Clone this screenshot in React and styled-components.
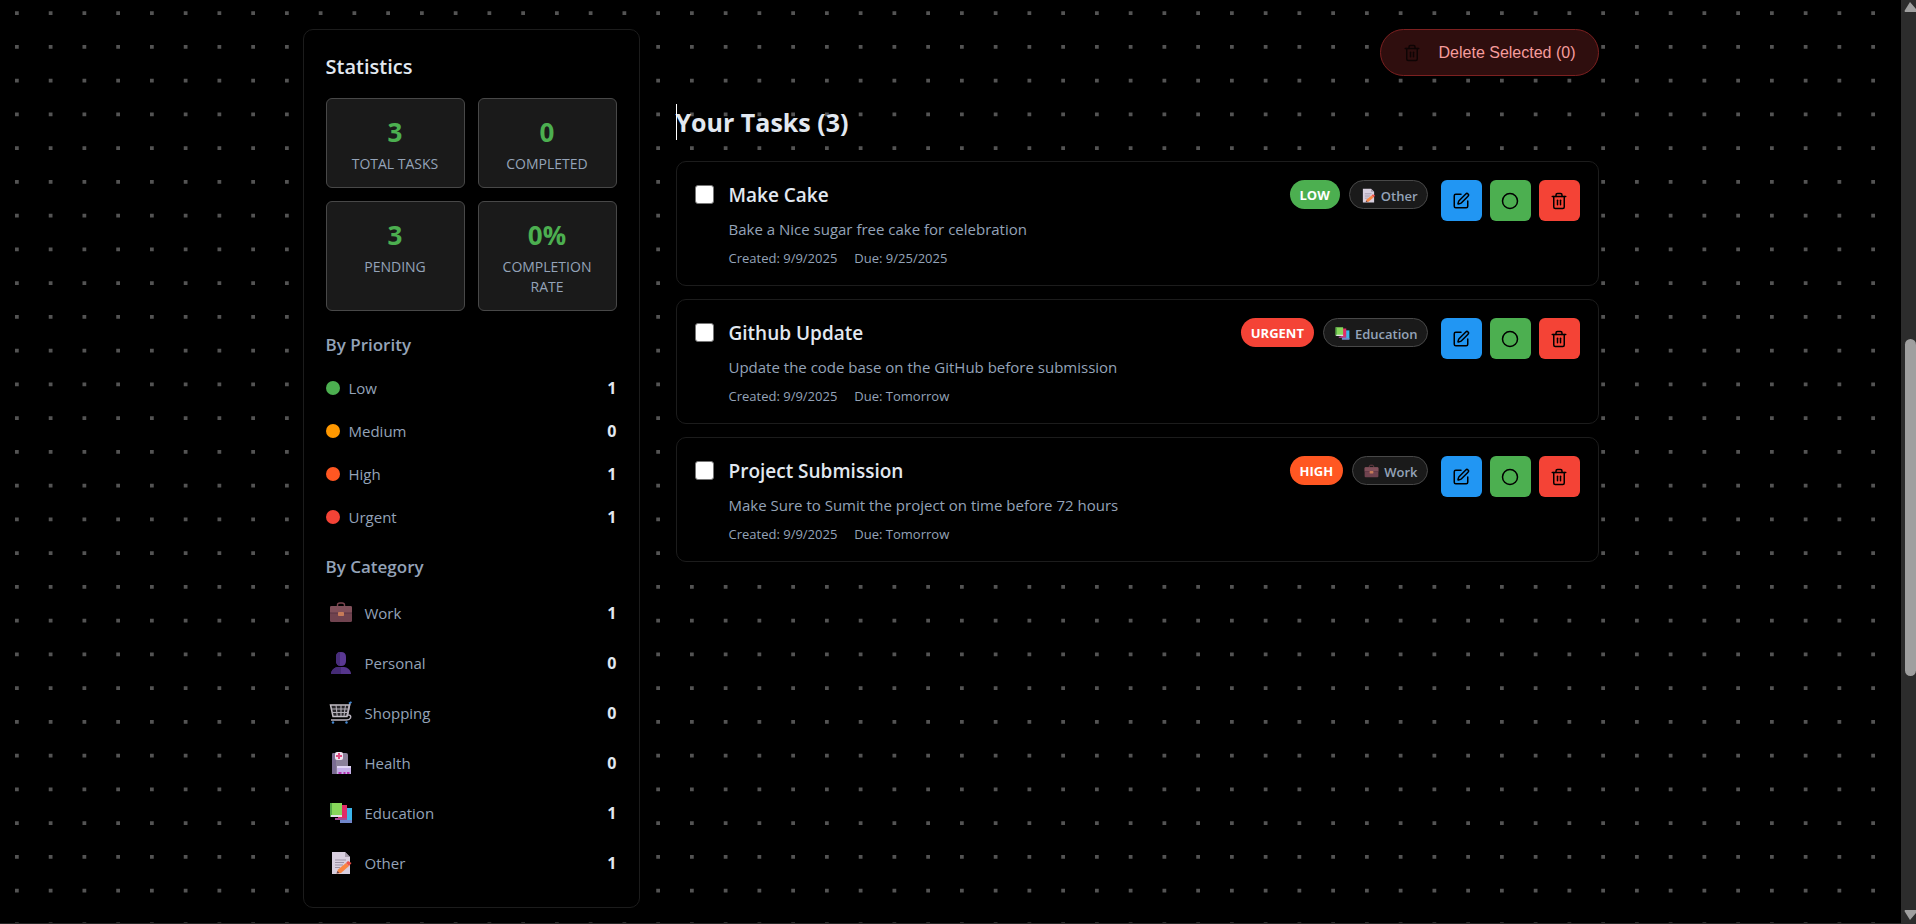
import React from "react";
import styled, { createGlobalStyle } from "styled-components";
import { Circle, SquarePen, Trash2 } from "lucide-react";

const GlobalStyle = createGlobalStyle`
  *, *::before, *::after { box-sizing: border-box; }
  html { background: #000; }
  body {
    margin: 0;
    color: #e2e8f0;
    font-family: "Open Sans", "Noto Sans", sans-serif;
    font-size: 15px;
    line-height: 24px;
    overflow-x: hidden;
  }
  h1, h2, h3, p, ul, dl, dd { margin: 0; padding: 0; }
`;

const Page = styled.div`
  display: flex;
  min-height: 100vh;
  position: relative;
  isolation: isolate;
`;

const Dots = styled.svg`
  position: absolute;
  inset: 0;
  z-index: -1;
  width: 100%;
  height: 100%;
  stroke: #545454;
`;

const Content = styled.div`
  flex: 1;
  min-width: 0;
  padding: 29px 24px 14px;
  border-bottom: 1px solid #262626;
`;

const Layout = styled.div`
  display: flex;
  align-items: flex-start;
  gap: 36px;
  max-width: 1296px;
  margin: 0 auto;
`;

const Panel = styled.aside`
  flex: 0 0 337px;
  padding: 22px 22px 19px;
  background: #000;
  border: 1px solid #1c1c1c;
  border-radius: 10px;
`;

const PanelTitle = styled.h2`
  font-size: 20px;
  font-weight: 600;
  line-height: 30px;
  margin-bottom: 16px;
`;

const StatGrid = styled.dl`
  display: grid;
  grid-template-columns: 1fr 1fr;
  gap: 13px;
`;

const StatCard = styled.div`
  display: flex;
  flex-direction: column-reverse;
  justify-content: flex-end;
  gap: 4px;
  padding: 15px 16px 13px;
  text-align: center;
  background: #1a1a1a;
  border: 1px solid #484848;
  border-radius: 6px;
`;

const StatValue = styled.dd`
  color: #4caf50;
  font-size: 26px;
  font-weight: 700;
  line-height: 36px;
`;

const StatLabel = styled.dt`
  color: #94a3b8;
  font-size: 14px;
  line-height: 20px;
  text-transform: uppercase;
`;

const GroupTitle = styled.h3`
  margin: ${(p) => p.$top}px 0 9px;
  color: #94a3b8;
  font-size: 17px;
  font-weight: 600;
  line-height: 24px;
`;

const List = styled.ul`
  list-style: none;
`;

const Row = styled.li`
  display: flex;
  align-items: center;
  gap: ${(p) => p.$gap}px;
  height: ${(p) => p.$height}px;
  color: #94a3b8;
`;

const Swatch = styled.span`
  width: 14px;
  height: 14px;
  border-radius: 50%;
  background: ${(p) => p.$color};
`;

const IconCell = styled.span`
  display: flex;
  justify-content: center;
  width: 30px;
`;

const Count = styled.strong`
  margin-left: auto;
  color: #e2e8f0;
  font-size: 16px;
  font-weight: 700;
`;

const Main = styled.main`
  flex: 1;
  min-width: 0;
  display: flex;
  flex-direction: column;
`;

const DeleteButton = styled.button`
  align-self: flex-end;
  display: flex;
  align-items: center;
  gap: 18px;
  height: 47px;
  padding: 0 22px;
  color: #f69c9c;
  background: #2f0e0e;
  border: 1px solid #7c2020;
  border-radius: 24px;
  font-family: "Liberation Sans", Arial, sans-serif;
  font-size: 16px;
  line-height: 20px;

  svg { color: #0e0404; }
`;

const TasksTitle = styled.h1`
  position: relative;
  margin: 28px 0 21px;
  font-size: 25px;
  font-weight: 700;
  line-height: 36px;
`;

const Caret = styled.span`
  position: absolute;
  left: 0;
  top: 0;
  width: 1px;
  height: 36px;
  background: #fff;
`;

const TaskList = styled.ul`
  list-style: none;
  display: grid;
  gap: 13px;
`;

const TaskCard = styled.li`
  display: flex;
  align-items: flex-start;
  padding: 18px 18px 17px;
  background: #000;
  border: 1px solid #1c1c1c;
  border-radius: 10px;
`;

const Check = styled.input`
  appearance: none;
  flex: none;
  width: 19px;
  height: 19px;
  margin: 5px 15px 0 0;
  background: #fff;
  border: 1px solid #767676;
  border-radius: 3px;

  &:checked { background: #2196f3; }
`;

const TaskBody = styled.div`
  flex: 1;
  min-width: 0;
`;

const TaskTitle = styled.label`
  display: block;
  font-size: 19px;
  font-weight: 600;
  line-height: 30px;
`;

const TaskText = styled.p`
  margin-top: 7px;
  color: #94a3b8;
`;

const Meta = styled.p`
  display: flex;
  gap: 17px;
  margin-top: 7px;
  color: #94a3b8;
  font-size: 13px;
  line-height: 20px;
`;

const Badges = styled.div`
  display: flex;
  gap: 9px;
  margin-right: 13px;
`;

const Badge = styled.span`
  display: flex;
  align-items: center;
  height: 29px;
  padding: 0 10px;
  color: #fff;
  background: ${(p) => p.$color};
  border-radius: 15px;
  font-size: 13px;
  font-weight: 700;
  line-height: 20px;
  text-transform: uppercase;
`;

const CategoryPill = styled.span`
  display: flex;
  align-items: center;
  gap: 5px;
  height: 29px;
  padding: 2px 9px 0 11px;
  color: #94a3b8;
  background: #1a1a1a;
  border: 1px solid #484848;
  border-radius: 15px;
  font-size: 13px;
  font-weight: 600;
  line-height: 20px;
`;

const Actions = styled.div`
  display: flex;
  gap: 8px;
`;

const ActionButton = styled.button`
  display: grid;
  place-items: center;
  width: 41px;
  height: 41px;
  padding: 0;
  color: #000;
  background: ${(p) => p.$color};
  border: 0;
  border-radius: 6px;
`;

const ScrollTrack = styled.div`
  flex: 0 0 15px;
  display: flex;
  flex-direction: column;
  height: 100vh;
  background: #2c2c2c;
  color: #9f9f9f;
`;

const ScrollArrow = styled.svg`
  display: block;
  flex: none;
  width: 15px;
  height: 17px;
`;

const ScrollSpace = styled.div`
  flex: ${(p) => p.$grow} 1 0;
`;

const ScrollThumb = styled.div`
  flex: 337 1 0;
  width: 11px;
  margin-left: 4px;
  background: #9f9f9f;
  border-radius: 6px;
`;

const drawings = {
  Work: (
    <>
      <path d="M8.500 5V4c0-1.500 1-2 2.500-2h2c1.500 0 2.500.5 2.500 2v1" fill="none" stroke="#7b4650" strokeWidth="1.400" />
      <rect x="1" y="5" width="22" height="16" rx="1.500" fill="#70434f" />
      <path d="M1 6.500Q1 5 2.500 5h19Q23 5 23 6.500V11q0 1-1.500 1h-19Q1 12 1 11z" fill="#81505a" />
      <path d="M1 12h22" stroke="#593442" />
      <rect x="9" y="11" width="6" height="4" rx=".7" fill="#c67b58" />
    </>
  ),
  Personal: (
    <>
      <path d="M2 23c0-4 4-7 7-7h6c3 0 7 3 7 7z" fill="#55358c" />
      <path d="M2 23c0-4 4-7 7-7h3v7z" fill="#452b76" />
      <path d="M7 6q0-5 5-5t5 5v4q0 5-5 5t-5-5z" fill="#5a3892" />
      <path d="M7 6q0-5 4-5v14q-4-1-4-5z" fill="#482d7b" />
    </>
  ),
  Shopping: (
    <>
      <path d="M1.500 4h19L18 15.500H4z" fill="#29272b" stroke="#c3bec5" strokeWidth="1.500" />
      <path d="M2 8h17.500M3 11.500h16M7 4l1.200 11M12 4v11M16.500 4L15 15" fill="none" stroke="#b3afb7" strokeWidth="1.100" />
      <path d="M21 2l-2.500 12q4-.5 3 3-1 2-4 2H2" fill="none" stroke="#b9b2bd" strokeWidth="1.500" />
      <path d="M20 2.500L22.500 1" stroke="#4387d0" strokeWidth="2" />
      <circle cx="4" cy="21.500" r="1.200" fill="#4387d0" />
      <circle cx="17.500" cy="21.500" r="1.200" fill="#4387d0" />
    </>
  ),
  Health: (
    <>
      <path d="M3 3.500Q3 2 4.500 2H17q2 0 2 2v19H3z" fill="#8b819a" />
      <path d="M3 3.500Q3 2 4.500 2H7v21H3z" fill="#796b91" />
      <rect x="6" y="1" width="8" height="8" rx="2" fill="#f1e4f1" />
      <path d="M10 2v6M7 5h6" stroke="#e04c83" strokeWidth="2" />
      <path d="M8 15h14v8H8z" fill="#c5b0e8" />
      <path d="M8 15h14v2H8z" fill="#e2d6f6" />
      <path d="M9.500 23v-2h3v2m2 0v-2h2v2m1.500 0v-2h2.500v2" fill="#b633b0" />
    </>
  ),
  Education: (
    <>
      <path d="M12 7h11v14H12z" fill="#3bb5ec" />
      <path d="M11 19h12v3H11z" fill="#7187cb" />
      <path d="M9 4h9v13.500H9z" fill="#e22c68" />
      <path d="M6 17h12v2H6z" fill="#a54b94" />
      <path d="M1 2h12v13H1z" fill="#87d75a" />
      <path d="M1 2h2v14H1z" fill="#55a948" />
      <path d="M2 14h11v2H2z" fill="#e2e0e8" />
    </>
  ),
  Other: (
    <>
      <path d="M3 1h13l5 5v17H3z" fill="#d8cfdf" />
      <path d="M16 1v5h5z" fill="#a69cac" />
      <path d="M6 9h11M6 11.500h9M6 14h8M6 16.500h5" stroke="#9b91a3" />
      <path d="M7.500 22.500l1.500-4 8-6.500 3 3-8 7z" fill="#fa8541" />
      <path d="M17 12l2-2 3.500 2-2.500 3z" fill="#ed5149" />
      <path d="M7.500 22.500l1-2.500 2 2z" fill="#604153" />
    </>
  ),
};

function CategoryIcon({ name, size }) {
  return (
    <svg width={size} height={size} viewBox="0 0 24 24" aria-hidden="true">
      {drawings[name]}
    </svg>
  );
}

function DotGrid() {
  return (
    <Dots aria-hidden="true">
      <g transform="scale(1.25)" strokeWidth="3" strokeDasharray="3 24">
        {Array.from({ length: 64 }, (_, i) => (
          <line key={i} x1="12" x2="3200" y1={i * 27 + 10.5} y2={i * 27 + 10.5} />
        ))}
      </g>
    </Dots>
  );
}

const stats = [
  ["Total Tasks", "3"],
  ["Completed", "0"],
  ["Pending", "3"],
  ["Completion Rate", "0%"],
];

const priorityColors = {
  Low: "#4caf50",
  Medium: "#ff9800",
  High: "#ff5722",
  Urgent: "#f44336",
};

const priorityCounts = { Low: 1, Medium: 0, High: 1, Urgent: 1 };
const categoryCounts = { Work: 1, Personal: 0, Shopping: 0, Health: 0, Education: 1, Other: 1 };

const tasks = [
  { id: 1, title: "Make Cake", text: "Bake a Nice sugar free cake for celebration", due: "9/25/2025", priority: "Low", category: "Other" },
  { id: 2, title: "Github Update", text: "Update the code base on the GitHub before submission", due: "Tomorrow", priority: "Urgent", category: "Education" },
  { id: 3, title: "Project Submission", text: "Make Sure to Sumit the project on time before 72 hours", due: "Tomorrow", priority: "High", category: "Work" },
];

function Statistics() {
  return (
    <Panel>
      <PanelTitle>Statistics</PanelTitle>
      <StatGrid>
        {stats.map(([label, value]) => (
          <StatCard key={label}>
            <StatLabel>{label}</StatLabel>
            <StatValue>{value}</StatValue>
          </StatCard>
        ))}
      </StatGrid>
      <GroupTitle $top={22}>By Priority</GroupTitle>
      <List>
        {Object.entries(priorityCounts).map(([name, count]) => (
          <Row key={name} $gap={9} $height={43}>
            <Swatch $color={priorityColors[name]} />
            <span>{name}</span>
            <Count>{count}</Count>
          </Row>
        ))}
      </List>
      <GroupTitle $top={17}>By Category</GroupTitle>
      <List>
        {Object.entries(categoryCounts).map(([name, count]) => (
          <Row key={name} $gap={9} $height={50}>
            <IconCell>
              <CategoryIcon name={name} size={24} />
            </IconCell>
            <span>{name}</span>
            <Count>{count}</Count>
          </Row>
        ))}
      </List>
    </Panel>
  );
}

function Task({ task }) {
  const id = `task-${task.id}`;
  return (
    <TaskCard>
      <Check type="checkbox" id={id} />
      <TaskBody>
        <TaskTitle htmlFor={id}>{task.title}</TaskTitle>
        <TaskText>{task.text}</TaskText>
        <Meta>
          <span>Created: 9/9/2025</span>
          <span>Due: {task.due}</span>
        </Meta>
      </TaskBody>
      <Badges>
        <Badge $color={priorityColors[task.priority]}>{task.priority}</Badge>
        <CategoryPill>
          <CategoryIcon name={task.category} size={15} />
          {task.category}
        </CategoryPill>
      </Badges>
      <Actions>
        <ActionButton $color="#2196f3" aria-label="Edit task">
          <SquarePen size={18} />
        </ActionButton>
        <ActionButton $color="#4caf50" aria-label="Mark complete">
          <Circle size={18} />
        </ActionButton>
        <ActionButton $color="#f44336" aria-label="Delete task">
          <Trash2 size={18} />
        </ActionButton>
      </Actions>
    </TaskCard>
  );
}

export default function App() {
  return (
    <Page>
      <GlobalStyle />
      <DotGrid />
      <Content>
        <Layout>
          <Statistics />
          <Main>
            <DeleteButton>
              <Trash2 size={18} />
              Delete Selected (0)
            </DeleteButton>
            <TasksTitle>
              <Caret />
              Your Tasks (3)
            </TasksTitle>
            <TaskList>
              {tasks.map((task) => (
                <Task key={task.id} task={task} />
              ))}
            </TaskList>
          </Main>
        </Layout>
      </Content>
      <ScrollTrack aria-hidden="true">
        <ScrollArrow viewBox="0 0 15 17">
          <path d="M9 2L15 9v3H4q-1-1 0-2z" fill="currentColor" />
        </ScrollArrow>
        <ScrollSpace $grow={322} />
        <ScrollThumb />
        <ScrollSpace $grow={231} />
        <ScrollArrow viewBox="0 0 15 17">
          <path d="M9 13L15 6V3H4q-1 1 0 2z" fill="currentColor" />
        </ScrollArrow>
      </ScrollTrack>
    </Page>
  );
}
